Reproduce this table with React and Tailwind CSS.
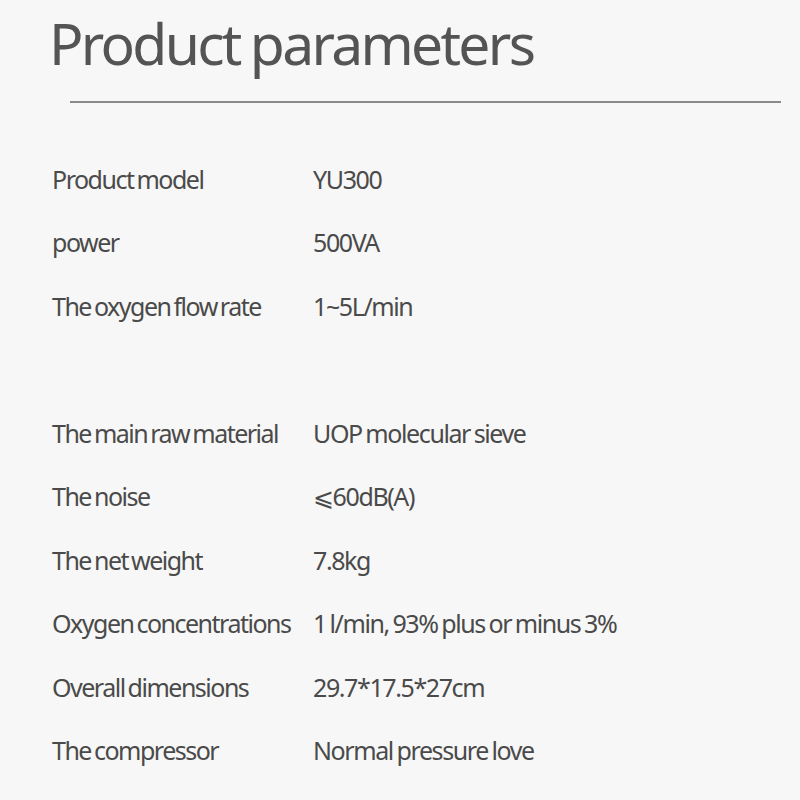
export default function App() {
  const rows1 = [
    ["Product model", "YU300"],
    ["power", "500VA"],
    ["The oxygen flow rate", "1~5L/min"],
  ];
  const rows2 = [
    ["The main raw material", "UOP molecular sieve"],
    ["The noise", "⩽60dB(A)"],
    ["The net weight", "7.8kg"],
    ["Oxygen concentrations", "1 l/min, 93% plus or minus 3%"],
    ["Overall dimensions", "29.7*17.5*27cm"],
    ["The compressor", "Normal pressure love"],
  ];
  const Row = ({ a, b }) => (
    <div className="flex items-center h-[63.5px]">
      <div className="w-[261px] shrink-0 tracking-[-1.5px] [word-spacing:-2px]">{a}</div>
      <div className="tracking-[-1.4px] [word-spacing:-1.5px]">{b}</div>
    </div>
  );
  return (
    <div
      className="w-[800px] h-[800px] bg-[#f7f7f7] text-[#4a4a4a] overflow-hidden"
      style={{ fontFamily: '"Noto Sans", sans-serif' }}
    >
      <h1 className="pl-[49px] pt-[9px] text-[57px] leading-[68px] text-[#545454] tracking-[-2.7px] [word-spacing:-2px]">
        Product parameters
      </h1>
      <div className="ml-[70px] mr-[19px] mt-[24px] h-[1.5px] bg-[#8a8a8a]" />
      <div className="pl-[52px] mt-[45px] text-[25px]">
        {rows1.map(([a, b]) => (
          <Row key={a} a={a} b={b} />
        ))}
        <div className="h-[63.5px]" />
        {rows2.map(([a, b]) => (
          <Row key={a} a={a} b={b} />
        ))}
      </div>
    </div>
  );
}
